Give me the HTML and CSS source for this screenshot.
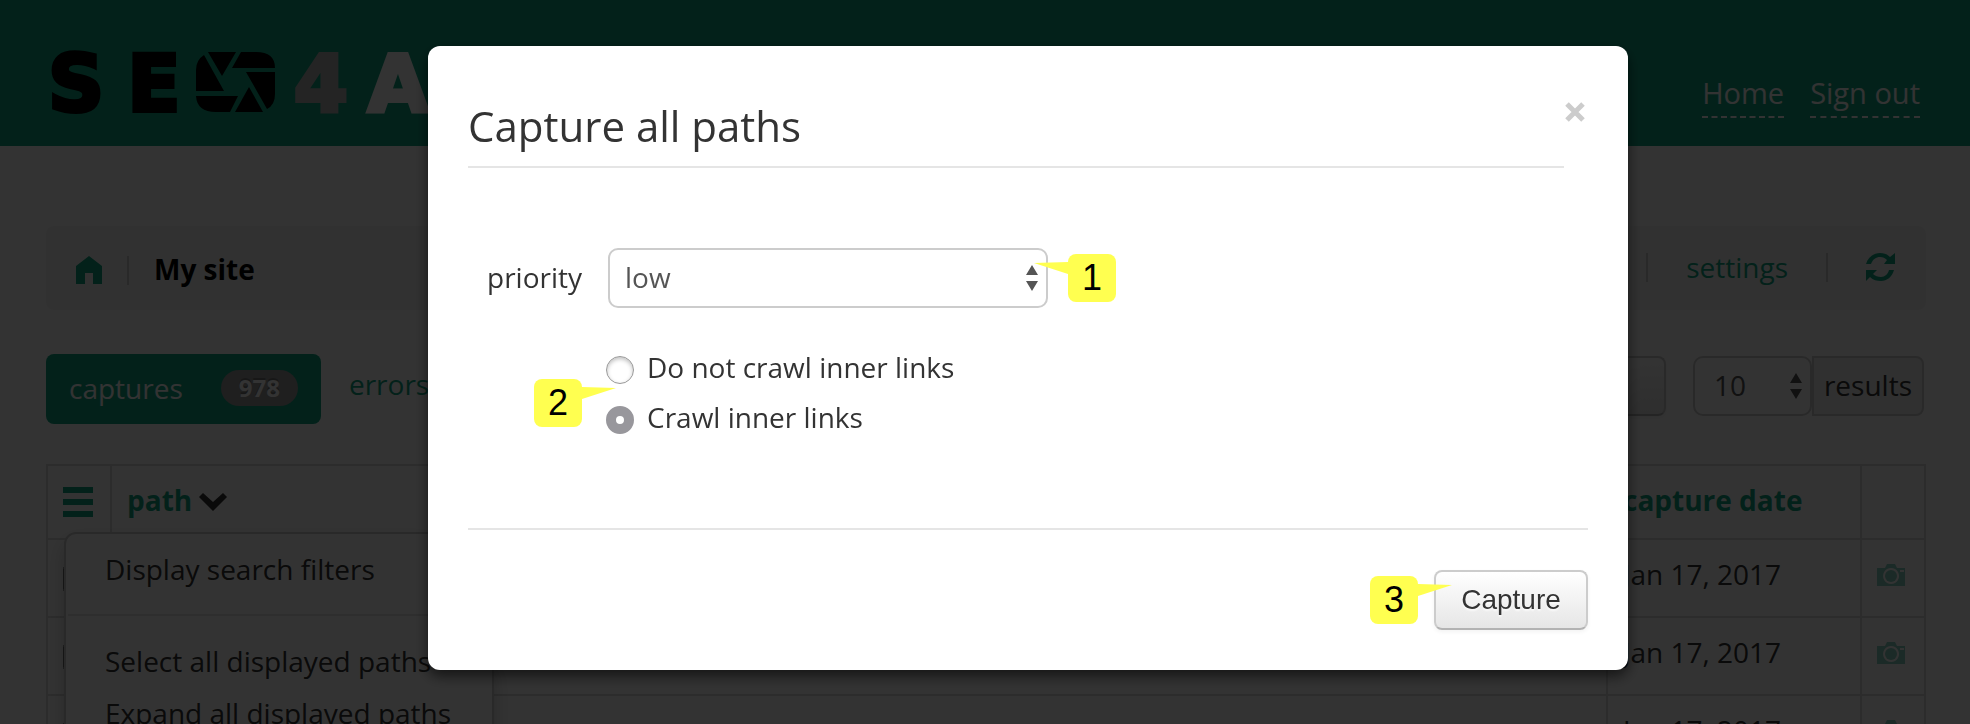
FILE: index.html
```html
<!DOCTYPE html>
<html lang="en">
<head>
    <meta charset="utf-8">
    <title>My site</title>
    <link rel="stylesheet" href="styles.css">
</head>
<body>
    <header class="navbar">
        <a class="brand" href="#" aria-label="SEO4A">
            <span>S</span>
            <span>E</span>
            <svg class="shutter" viewBox="0 0 80 60" aria-hidden="true">
                <path d="M8 3 L28 39 H0 V18 Q0 8 8 3Z"/>
                <path d="M12 0 H40 L26 24Z"/>
                <path d="M45 0 H60 Q79 0 79 16 H36Z"/>
                <path d="M50 20 H79 V42 Q79 53 71 57Z"/>
                <path d="M53 35 L67 60 H39Z"/>
                <path d="M0 44 H42 L34 60 H20 Q1 60 0 44Z"/>
            </svg>
            <span class="four">4</span>
            <span class="ajax">A</span>
        </a>
        <nav class="user-nav">
            <a href="#">Home</a>
            <a href="#">Sign out</a>
        </nav>
    </header>

    <main class="container">
        <div class="breadcrumb">
            <a href="#" aria-label="Sites">
                <svg class="icon-home" viewBox="0 0 26 28"><path d="M13 0 L26 10 V28 H17 V17 H9 V28 H0 V10Z"/></svg>
            </a>
            <span class="divider"></span>
            <strong class="site-name">My site</strong>
            <div class="actions">
                <span class="divider"></span>
                <a href="#">settings</a>
                <span class="divider"></span>
                <a href="#" aria-label="Refresh">
                    <svg class="icon-refresh" viewBox="0 0 29 29">
                        <path d="M0 11 C2 4 8 0 14 0 C18 0 21 1 24 4 L29 0 V11 H18 L21 7 C19 5 17 4 14 4 C10 4 7 6 5 11Z"/>
                        <path d="M28 17 C26 24 21 28 15 28 C11 28 7 27 4 24 L0 28 V17 H11 L7 21 C9 23 12 24 15 24 C19 24 22 21 23 17Z"/>
                    </svg>
                </a>
            </div>
        </div>

        <div class="toolbar">
            <a class="tab active" href="#">captures <span class="badge">978</span></a>
            <a class="tab" href="#">errors</a>
            <div class="paging">
                <button class="btn" type="button" aria-label="Filter"></button>
                <div class="input-append">
                    <div class="select-wrap count">
                        <select id="count"><option>10</option></select>
                        <svg class="arrows" viewBox="0 0 12 26"><path d="M6 0 L12 10 H0Z M0 16 H12 L6 26Z"/></svg>
                    </div>
                    <label class="add-on" for="count">results</label>
                </div>
            </div>
        </div>

        <div class="grid">
            <table class="table">
                <thead>
                    <tr>
                        <th class="col-icon">
                            <svg class="icon-menu" viewBox="0 0 30 30"><path d="M0 0h30v6H0z M0 12h30v6H0z M0 24h30v6H0z"/></svg>
                        </th>
                        <th>path <svg class="icon-chevron" viewBox="0 0 28 18"><path d="M4 0 L14 9 L24 0 L28 4 L14 18 L0 4Z"/></svg></th>
                        <th class="col-date">capture date</th>
                        <th class="col-icon"></th>
                    </tr>
                </thead>
                <tbody>
                    <tr>
                        <td><input type="checkbox" aria-label="Select path"></td>
                        <td></td>
                        <td>Jan 17, 2017</td>
                        <td><svg class="icon-camera" viewBox="0 0 28 22"><path fill-rule="evenodd" d="M0 4 H8 L10 0 H18 L20 4 H28 V22 H0Z M14 4 a8 8 0 1 0 0.1 0Z M23 6 V8 H27 V6Z"/><circle cx="14" cy="12" r="6"/></svg></td>
                    </tr>
                    <tr>
                        <td><input type="checkbox" aria-label="Select path"></td>
                        <td></td>
                        <td>Jan 17, 2017</td>
                        <td><svg class="icon-camera" viewBox="0 0 28 22"><path fill-rule="evenodd" d="M0 4 H8 L10 0 H18 L20 4 H28 V22 H0Z M14 4 a8 8 0 1 0 0.1 0Z M23 6 V8 H27 V6Z"/><circle cx="14" cy="12" r="6"/></svg></td>
                    </tr>
                    <tr>
                        <td><input type="checkbox" aria-label="Select path"></td>
                        <td></td>
                        <td>Jan 17, 2017</td>
                        <td><svg class="icon-camera" viewBox="0 0 28 22"><path fill-rule="evenodd" d="M0 4 H8 L10 0 H18 L20 4 H28 V22 H0Z M14 4 a8 8 0 1 0 0.1 0Z M23 6 V8 H27 V6Z"/><circle cx="14" cy="12" r="6"/></svg></td>
                    </tr>
                </tbody>
            </table>

            <ul class="dropdown-menu">
                <li><a href="#">Display search filters</a></li>
                <li class="separator"></li>
                <li><a href="#">Select all displayed paths</a></li>
                <li><a href="#">Expand all displayed paths</a></li>
            </ul>
        </div>
    </main>

    <div class="backdrop"></div>

    <form class="modal" role="dialog" aria-labelledby="modal-title">
        <div class="modal-header">
            <h3 id="modal-title">Capture all paths</h3>
            <button class="close" type="button" aria-label="Close">
                <svg viewBox="0 0 20 20"><path d="M2 2 L18 18 M18 2 L2 18"/></svg>
            </button>
        </div>
        <div class="modal-body">
            <div class="field">
                <label for="priority">priority</label>
                <div class="select-wrap">
                    <select id="priority"><option>low</option></select>
                    <svg class="arrows" viewBox="0 0 12 26"><path d="M6 0 L12 10 H0Z M0 16 H12 L6 26Z"/></svg>
                    <div class="callout callout-left">1<svg viewBox="0 0 34 12"><path d="M34 0 L0 1 L34 12Z"/></svg></div>
                </div>
            </div>
            <div class="choices">
                <label><input type="radio" name="crawl">Do not crawl inner links</label>
                <label><input type="radio" name="crawl" checked>Crawl inner links</label>
                <div class="callout callout-right">2<svg viewBox="0 0 34 12"><path d="M0 0 L34 1 L0 12Z"/></svg></div>
            </div>
        </div>
        <div class="modal-footer">
            <button class="btn" type="button">Capture</button>
            <div class="callout callout-right">3<svg viewBox="0 0 34 12"><path d="M0 0 L34 1 L0 12Z"/></svg></div>
        </div>
    </form>
</body>
</html>
```

FILE: styles.css
```css
* {
    box-sizing: border-box;
}
html {
    overflow: hidden;
}
body {
    display: flex;
    flex-direction: column;
    height: 100vh;
    margin: 0;
    background: #fff;
    color: #333;
    font: 28px/40px "Open Sans", sans-serif;
}
a {
    color: #11a683;
    text-decoration: none;
}
svg {
    display: block;
    fill: currentColor;
}

/* top bar */
.navbar {
    display: flex;
    flex: none;
    justify-content: space-between;
    align-items: flex-start;
    height: 146px;
    padding: 52px 50px 0 40px;
    background: #11a683;
}
.brand {
    display: grid;
    grid-template-columns: 72px 66px 80px 72px 64px;
    gap: 9px;
    justify-items: center;
    color: #000;
    font: bold 78px/64px "DejaVu Sans", sans-serif;
    -webkit-text-stroke: 4px currentColor;
}
.shutter {
    width: 80px;
    height: 60px;
}
.four {
    color: #b3b3b3;
}
.ajax {
    color: #fff;
}
.user-nav {
    display: flex;
    gap: 26px;
    padding-top: 21px;
}
.user-nav a {
    padding-bottom: 3px;
    border-bottom: 2px dashed #fff;
    color: #fff;
    font-size: 29px;
}

/* site bar */
.container {
    flex: 1;
    min-height: 0;
    overflow: hidden;
    padding: 80px 44px 0 46px;
}
.breadcrumb {
    display: flex;
    align-items: center;
    height: 84px;
    padding: 4px 31px 0 30px;
    border-radius: 8px;
    background: #f5f5f5;
}
.divider {
    width: 2px;
    height: 29px;
    margin: 0 25px;
    background: #ccc;
}
.site-name {
    padding-bottom: 2px;
    color: #000;
}
.actions {
    display: flex;
    align-items: center;
    margin-left: auto;
    padding-bottom: 6px;
}
.actions .divider {
    margin: 0 38px;
}
.icon-home {
    width: 26px;
    height: 28px;
}
.icon-refresh {
    width: 29px;
    height: 29px;
}

/* tabs and paging */
.toolbar {
    display: flex;
    align-items: center;
    height: 70px;
    margin: 44px 0 40px;
}
.tab {
    padding: 0 28px 10px;
}
.tab.active {
    display: flex;
    align-items: center;
    gap: 38px;
    height: 70px;
    padding: 0 23px 2px;
    border-radius: 8px;
    background: #11a683;
    color: #fff;
}
.badge {
    padding: 0 18px;
    border-radius: 18px;
    background: #999;
    font-size: 24px;
    font-weight: bold;
    line-height: 36px;
    text-shadow: 0 -2px 0 rgba(0, 0, 0, .25);
}
.paging {
    display: flex;
    gap: 27px;
    margin-left: auto;
    padding: 0 2px 6px 0;
}
.input-append {
    display: flex;
}
.add-on {
    height: 60px;
    padding: 7px 10px;
    border: 2px solid #ccc;
    border-radius: 0 8px 8px 0;
    background: #eee;
}

/* form controls */
.btn {
    min-width: 154px;
    height: 60px;
    padding: 0 25px;
    border: 2px solid #ccc;
    border-bottom-color: #b3b3b3;
    border-radius: 8px;
    background: linear-gradient(#fff, #e6e6e6);
    box-shadow: 0 2px 4px rgba(0, 0, 0, .05);
    color: #333;
    font: 28px/40px "Liberation Sans", sans-serif;
    text-shadow: 0 2px 2px rgba(255, 255, 255, .75);
}
.select-wrap {
    position: relative;
    width: 440px;
}
.select-wrap select {
    width: 100%;
    height: 60px;
    padding: 0 15px 2px;
    border: 2px solid #ccc;
    border-radius: 10px;
    background: #fff;
    color: #555;
    font: 28px/40px "Open Sans", sans-serif;
    appearance: none;
}
.select-wrap.count {
    width: 119px;
}
.select-wrap.count select {
    padding-left: 19px;
}
.arrows {
    position: absolute;
    top: 17px;
    right: 10px;
    width: 12px;
    height: 26px;
    color: #555;
}

/* captures list */
.grid {
    position: relative;
}
.table {
    width: 100%;
    border-collapse: collapse;
    table-layout: fixed;
}
.table th,
.table td {
    height: 78px;
    padding: 14px 15px;
    border: 2px solid #ddd;
    text-align: left;
    vertical-align: top;
}
.table th {
    height: 74px;
    color: #11a683;
}
.table .col-icon {
    width: 64px;
}
.table .col-date {
    width: 254px;
}
.table input {
    display: block;
    width: 26px;
    height: 26px;
    margin: 12px 0 0;
}
.icon-menu {
    width: 30px;
    height: 30px;
    margin-top: 7px;
}
.icon-chevron {
    display: inline-block;
    width: 28px;
    height: 18px;
    color: #333;
}
.icon-camera {
    width: 28px;
    height: 22px;
    margin-top: 10px;
    color: #11a683;
    opacity: .5;
}
.dropdown-menu {
    position: absolute;
    top: 68px;
    left: 18px;
    width: 430px;
    margin: 0;
    padding: 9px 0;
    border: 2px solid #ccc;
    border-radius: 12px;
    background: #fff;
    box-shadow: 0 10px 20px rgba(0, 0, 0, .2);
    list-style: none;
    white-space: nowrap;
}
.dropdown-menu a {
    display: block;
    padding: 6px 39px;
    color: #333;
}
.dropdown-menu .separator {
    height: 2px;
    margin: 19px 2px;
    background: #e5e5e5;
}

/* capture dialog */
.backdrop {
    position: fixed;
    inset: 0;
    background: #000;
    opacity: .8;
}
.modal {
    position: fixed;
    top: 46px;
    left: 50%;
    width: 1200px;
    margin-left: -557px;
    padding: 40px;
    border-radius: 12px;
    background: #fff;
    box-shadow: 0 6px 14px rgba(0, 0, 0, .6);
}
.modal-header {
    display: flex;
    align-items: flex-start;
}
.modal-header h3 {
    flex: 1;
    margin: 0;
    padding: 10px 0;
    border-bottom: 2px solid #e5e5e5;
    font-size: 42px;
    font-weight: normal;
    line-height: 60px;
}
.close {
    width: 24px;
    padding: 16px 0 0 1px;
    border: 0;
    background: none;
    color: #ccc;
}
.close svg {
    width: 20px;
    height: 20px;
    stroke: currentColor;
    stroke-width: 5;
}
.modal-body {
    padding: 80px 0 91px 19px;
}
.field {
    display: flex;
    align-items: center;
    gap: 26px;
}
.field label {
    padding-bottom: 2px;
}
.choices {
    position: relative;
    display: grid;
    gap: 10px;
    justify-items: start;
    margin: 39px 0 0 119px;
}
.choices label {
    display: flex;
    align-items: center;
    gap: 13px;
}
.choices input {
    width: 28px;
    height: 28px;
    margin: 6px 0 0;
    border: 1px solid #999;
    border-radius: 50%;
    background: #fff;
    box-shadow: inset 0 2px 4px rgba(0, 0, 0, .25);
    appearance: none;
}
.choices input:checked {
    border: 10px solid #98979c;
    box-shadow: none;
}
.modal-footer {
    position: relative;
    display: flex;
    justify-content: flex-end;
    padding-top: 40px;
    border-top: 2px solid #e5e5e5;
}

/* numbered hints */
.callout {
    position: absolute;
    width: 48px;
    height: 48px;
    border-radius: 8px;
    background: #ffff50;
    color: #000;
    font: 36px/48px "Liberation Sans", sans-serif;
    text-align: center;
}
.callout svg {
    position: absolute;
    top: 8px;
    width: 34px;
    height: 12px;
    color: #ffff50;
}
.callout-left {
    top: 6px;
    left: 460px;
}
.callout-left svg {
    right: 100%;
}
.callout-right svg {
    left: 100%;
}
.choices .callout {
    top: 32px;
    left: -72px;
}
.modal-footer .callout {
    top: 46px;
    right: 170px;
}
```
